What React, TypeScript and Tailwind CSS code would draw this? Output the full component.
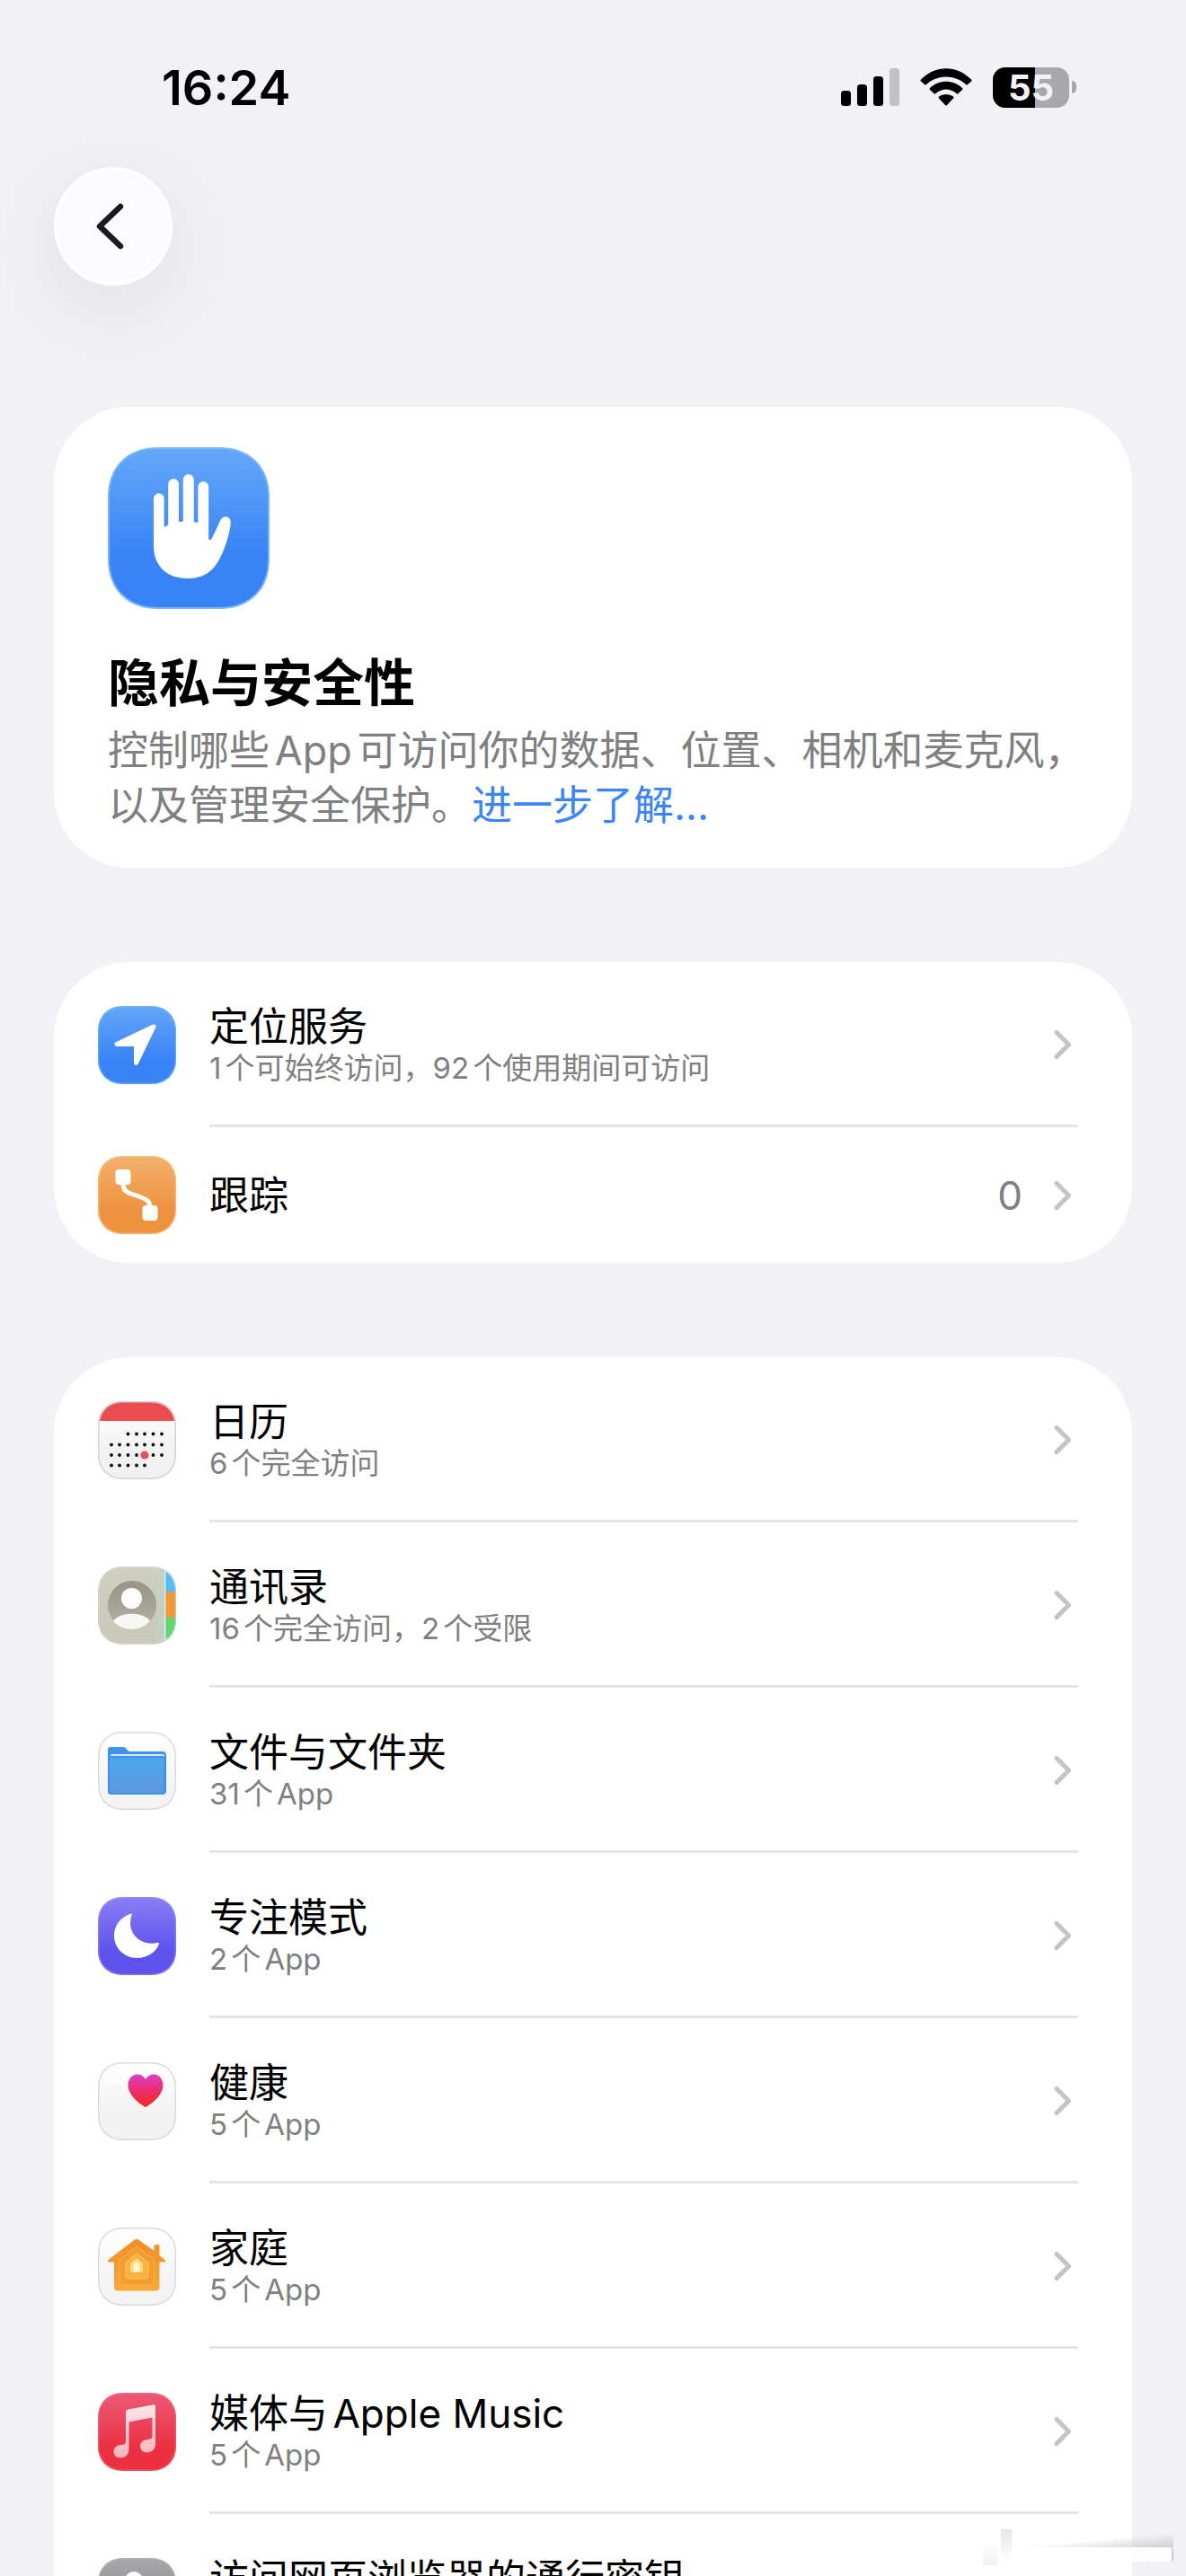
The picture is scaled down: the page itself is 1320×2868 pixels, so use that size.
import React from "react";

/* ── Types ─────────────────────────────────────────────────────────────────── */
interface SettingItem {
  title: string;
  detail?: string;
  value?: string;
  icon: React.ReactNode;
}

interface TileProps {
  id: string;
  from: string;
  to: string;
  edge: string;
  children: React.ReactNode;
}

/* ── App icon tile ─────────────────────────────────────────────────────────── */
const TILE_PATH =
  "M28 0H59C76 0 87 11 87 28V59C87 76 76 87 59 87H28C11 87 0 76 0 59V28C0 11 11 0 28 0Z";

const Tile = ({ id, from, to, edge, children }: TileProps) => (
  <svg viewBox="0 0 87 87" className="size-[87px] shrink-0" aria-hidden="true">
    <defs>
      <linearGradient id={`${id}-bg`} x1="0" y1="0" x2="0" y2="1">
        <stop offset="0" stopColor={from} />
        <stop offset="0.7" stopColor={to} />
        <stop offset="1" stopColor={to} />
      </linearGradient>
      <clipPath id={`${id}-clip`}>
        <path d={TILE_PATH} />
      </clipPath>
    </defs>
    <g clipPath={`url(#${id}-clip)`}>
      <rect width="87" height="87" fill={`url(#${id}-bg)`} />
      {children}
      <path d={TILE_PATH} fill="none" stroke={edge} strokeWidth="3" />
    </g>
  </svg>
);

/* ── Icons ─────────────────────────────────────────────────────────────────── */
const LocationIcon = () => (
  <Tile id="location" from="#64a8f8" to="#3883f6" edge="#7ab8f988">
    <path
      d="M62 23L21 42.5H42.500V63.500Z"
      fill="#fff"
      stroke="#fff"
      strokeWidth="5"
      strokeLinejoin="round"
    />
  </Tile>
);

const TrackingIcon = () => (
  <Tile id="tracking" from="#f2b26c" to="#ee9240" edge="#f6c88a99">
    <rect x="19.500" y="15" width="17" height="17" rx="4" fill="#fff" />
    <rect x="49.500" y="55" width="17" height="17" rx="4" fill="#fff" />
    <path
      d="M28 30C28 38 31 40 38 42.500L48 46C55 49 58 51 58 57"
      fill="none"
      stroke="#fff"
      strokeWidth="5"
    />
  </Tile>
);

const DOT_COLS = [15, 24, 33.5, 43, 52, 61.5, 71];
const DOT_ROWS = [
  { y: 36.5, start: 2, end: 6 },
  { y: 48.5, start: 0, end: 6 },
  { y: 60, start: 0, end: 6 },
  { y: 71.5, start: 0, end: 4 },
];

const CalendarIcon = () => (
  <Tile id="calendar" from="#ffffff" to="#f1f1f2" edge="#d4d4d6">
    {DOT_ROWS.map((row) =>
      DOT_COLS.slice(row.start, row.end + 1).map((x) => (
        <circle key={`${x}-${row.y}`} cx={x} cy={row.y} r="1.9" fill="#111" />
      ))
    )}
    <circle cx="52" cy="60" r="4.600" fill="#ea4f55" />
    <rect width="87" height="22" fill="#ea4c50" />
  </Tile>
);

const ContactsIcon = () => (
  <Tile id="contacts" from="#cfd0c2" to="#cac9bc" edge="#dcdcd288">
    <defs>
      <linearGradient id="contacts-ring" x1="0" y1="0" x2="0" y2="1">
        <stop offset="0" stopColor="#979386" />
        <stop offset="1" stopColor="#b5b1a3" />
      </linearGradient>
      <linearGradient id="contacts-spine" x1="0" y1="0" x2="1" y2="0">
        <stop offset="0" stopColor="#cbd3c6" stopOpacity="0" />
        <stop offset="1" stopColor="#b9d3c6" />
      </linearGradient>
    </defs>
    <rect x="62" width="13" height="87" fill="url(#contacts-spine)" />
    <rect x="75" width="12" height="28" fill="#55bdf6" />
    <rect x="75" y="28" width="12" height="29" fill="#f1983a" />
    <rect x="75" y="57" width="12" height="30" fill="#5dd671" />
    <rect x="74" width="1.500" height="87" fill="#e6ebe2" />
    <circle cx="38" cy="43" r="27" fill="url(#contacts-ring)" />
    <circle cx="37.500" cy="35.500" r="11.500" fill="#fcfcfb" />
    <path d="M17 60.500C25 50 50 50 58 60.500C49 73 26 73 17 60.500Z" fill="#f7f7f5" />
  </Tile>
);

const FilesIcon = () => (
  <Tile id="files" from="#ffffff" to="#f4f4f4" edge="#dadada">
    <defs>
      <linearGradient id="files-front" x1="0" y1="0" x2="0" y2="1">
        <stop offset="0" stopColor="#4aa9ee" />
        <stop offset="1" stopColor="#5f98dd" />
      </linearGradient>
    </defs>
    <path
      d="M14 17H28C32 17 32 22 36 22H72Q76 22 76 26V66Q76 70 72 70H15Q11 70 11 66V20Q11 17 14 17Z"
      fill="#3f93ee"
    />
    <rect x="14" y="25" width="60" height="5" rx="2" fill="#d4ecfc" />
    <rect x="12" y="28" width="62" height="41" rx="3" fill="url(#files-front)" stroke="#4390ee" strokeWidth="2" />
  </Tile>
);

const FocusIcon = () => (
  <Tile id="focus" from="#8b7ef5" to="#5d52ec" edge="#a59cf477">
    <path
      d="M37 18.500C25.500 22 18 31.500 18 43C18 57 29.500 68 43.500 68C55 68 65 61 68 52.500C68.400 51.300 67.500 50.600 66 51C48 55 31 41 37.500 20C37.800 19 37.800 18.300 37 18.500Z"
      fill="#fff"
    />
  </Tile>
);

const HealthIcon = () => (
  <Tile id="health" from="#ffffff" to="#f2f2f2" edge="#dadada">
    <defs>
      <linearGradient id="health-heart" x1="0" y1="0" x2="0" y2="1">
        <stop offset="0" stopColor="#dc3fc8" />
        <stop offset="0.5" stopColor="#ec2d6c" />
        <stop offset="1" stopColor="#f5291f" />
      </linearGradient>
    </defs>
    <path
      d="M53 50C49 48 33.500 38 33.500 25.500C33.500 18.500 38 13.500 43.500 13.500C48 13.500 51 15.500 53 19C55 15.500 58 13.500 62.500 13.500C68 13.500 72.500 18.500 72.500 25.500C72.500 38 57 48 53 50Z"
      fill="url(#health-heart)"
    />
  </Tile>
);

const HomeIcon = () => (
  <Tile id="home" from="#ffffff" to="#f4f4f4" edge="#dadada">
    <defs>
      <linearGradient id="home-outer" x1="0" y1="0" x2="0" y2="1">
        <stop offset="0" stopColor="#ee8d2d" />
        <stop offset="1" stopColor="#f6ab38" />
      </linearGradient>
    </defs>
    <path
      d="M41 13.500Q43 12 45 13.500L62.500 26V20.500Q62.500 19 64 19H67Q68.500 19 68.500 20.500V31L75 36.500Q76 38.500 74 38.500H68.500V66Q68.500 70.500 64 70.500H22.500Q18 70.500 18 66V38.500H12Q10 38 11.500 36Z"
      fill="url(#home-outer)"
    />
    <path d="M43 21L62.500 36V61Q62.500 64 59.500 64H27Q24 64 24 61V36Z" fill="#f49c2d" stroke="#f8b452" />
    <path d="M43 29L56 39V54Q56 57 53 57H34Q31 57 31 54V39Z" fill="#f7b23f" stroke="#fac766" />
    <path d="M43 34L50 40V50H36V40Z" fill="#fbd77a" />
    <path d="M43 38L46.500 41V49H39.500V41Z" fill="#fff8d8" />
  </Tile>
);

const MusicIcon = () => (
  <Tile id="music" from="#ec5a76" to="#ec3042" edge="#f2838f66">
    <defs>
      <linearGradient id="music-note" x1="0" y1="0" x2="0" y2="1">
        <stop offset="0" stopColor="#fde6ea" />
        <stop offset="1" stopColor="#f7b4bd" />
      </linearGradient>
    </defs>
    <path
      d="M33.500 18.500L62 13.200Q64 13 64 15V57.500C64 63 60 66.500 54.500 66.500C50 66.500 47 63.500 47 59.800C47 55.500 50 53 54 52.300L58 51.500Q60.500 51 60.500 48.500V27.500L34.500 32.500V62.500C34.500 69 30.500 72.500 25 72.500C20.500 72.500 17.500 69.500 17.500 65.800C17.500 61.500 20.500 59 24.500 58.300L28.500 57.500Q31 57 31 54.500V21.500Q31 19 33.500 18.500Z"
      fill="url(#music-note)"
    />
  </Tile>
);

const PasskeyIcon = () => (
  <Tile id="passkey" from="#a7a7ab" to="#8d8d92" edge="#bcbcc077">
    <circle cx="40" cy="25" r="10" fill="#fff" />
    <path d="M20 62C20 46 30 40 40 40S60 46 60 62Z" fill="#fff" />
  </Tile>
);

const HandIcon = () => (
  <svg viewBox="0 0 180 180" className="size-[180px]" aria-hidden="true">
    <defs>
      <linearGradient id="hand-bg" x1="0" y1="0" x2="0" y2="1">
        <stop offset="0" stopColor="#64a8f8" />
        <stop offset="0.68" stopColor="#3883f6" />
        <stop offset="1" stopColor="#3883f6" />
      </linearGradient>
    </defs>
    <path
      d="M56 1H124C158 1 179 22 179 56V124C179 158 158 179 124 179H56C22 179 1 158 1 124V56C1 22 22 1 56 1Z"
      fill="url(#hand-bg)"
      stroke="#76b5f9"
      strokeWidth="2"
    />
    <path
      d="M51 57a5.800 5.800 0 0 1 11.600 0V89L67.200 86.500V41a5.900 5.900 0 0 1 11.800 0V83L83.800 82.500V36a6 6 0 0 1 12 0V83L100.400 84V44a5.900 5.900 0 0 1 11.800 0V102.500Q114.500 104 116 101L125.500 81C129 74.500 137.500 77 136.800 84.500C136 94 131 111 125.500 122C117.500 138.500 107 146 88 146C66 146 51 132 51 110Z"
      fill="#fff"
    />
  </svg>
);

const Chevron = () => (
  <svg viewBox="0 0 20 34" className="h-[34px] w-5 shrink-0" fill="none" aria-hidden="true">
    <path
      d="M3 3.500L16.500 17L3 30.500"
      stroke="#c4c4c6"
      strokeWidth="5"
      strokeLinecap="round"
      strokeLinejoin="round"
    />
  </svg>
);

/* ── Status bar ────────────────────────────────────────────────────────────── */
const SignalIcon = () => (
  <svg viewBox="0 0 65 42" className="h-[42px] w-[65px]" aria-label="信号">
    <rect x="0" y="25" width="11" height="17" rx="3.500" />
    <rect x="18" y="18" width="11" height="24" rx="3.500" />
    <rect x="36" y="9" width="11" height="33" rx="3.500" />
    <rect x="54" y="0" width="11" height="42" rx="3.500" fill="#c0c0c5" />
  </svg>
);

const WifiIcon = () => (
  <svg viewBox="0 0 58 42" className="h-[42px] w-[58px]" aria-label="Wi-Fi">
    <path d="M1 12.500C17 -4 41 -4 57 12.500Q58 13.500 57 14.500L53 18Q52 19 51 18C38.500 6.500 19.500 6.500 7 18Q6 19 5 18L1 14.500Q0 13.500 1 12.500Z" />
    <path d="M11 22C21.500 12.300 36.500 12.300 47 22Q48 23 47 24L42.500 28Q41.500 29 40.500 28C33.500 22 24.500 22 17.500 28Q16.500 29 15.500 28L11 24Q10 23 11 22Z" />
    <path d="M21 31.500C25.500 28 32.500 28 37 31.500Q38 32.500 37 33.500L30 41Q29 42 28 41L21 33.500Q20 32.500 21 31.500Z" />
  </svg>
);

const Battery = ({ level }: { level: number }) => (
  <div className="flex items-center gap-[3px]">
    <div className="relative flex h-[45px] w-[85px] items-center justify-center rounded-[14px] bg-[#a8a8ac]">
      <div className="absolute inset-y-0 left-0 rounded-l-[14px] bg-black" style={{ width: `${level}%` }} />
      <span className="relative text-[40px] leading-[45px] font-bold text-[#f2f2f6]">{level}</span>
    </div>
    <div className="h-[14px] w-[5px] rounded-r-full bg-[#a8a8ac]" />
  </div>
);

const StatusBar = () => (
  <header className="flex h-[186px] items-start justify-between pt-[66px] pr-[122px] pl-[180px]">
    <time className="text-[54px] leading-[64px] font-semibold">16:24</time>
    <div className="flex h-[62px] items-center gap-[23px]">
      <SignalIcon />
      <WifiIcon />
      <Battery level={55} />
    </div>
  </header>
);

/* ── Lists ─────────────────────────────────────────────────────────────────── */
const Row = ({ item, last }: { item: SettingItem; last: boolean }) => (
  <li>
    <a href="#" className={`flex gap-[37px] pl-[49px] ${last ? "h-[151px]" : "h-[184px]"}`}>
      <span className={`flex items-center ${last ? "" : "pt-px"}`}>{item.icon}</span>
      <span
        className={`mr-[60px] flex min-w-0 flex-1 items-center pr-[7px] ${
          last ? "" : "border-b-[3px] border-[#e6e6e6] pt-[3px]"
        }`}
      >
        <span className="flex min-w-0 flex-1 flex-col">
          <span className="text-[44px] leading-[52px] text-black">{item.title}</span>
          {item.detail && (
            <span className="text-[33px] leading-[40px] text-[#808080]">{item.detail}</span>
          )}
        </span>
        {item.value && (
          <span className="mr-[35px] text-[44px] leading-[52px] text-[#808080]">{item.value}</span>
        )}
        <Chevron />
      </span>
    </a>
  </li>
);

const Group = ({ items, open = false }: { items: SettingItem[]; open?: boolean }) => (
  <ul className="shrink-0 rounded-[84px] bg-white">
    {items.map((item, i) => (
      <Row key={item.title} item={item} last={!open && i === items.length - 1} />
    ))}
  </ul>
);

const LOCATION_ITEMS: SettingItem[] = [
  { title: "定位服务", detail: "1个可始终访问，92个使用期间可访问", icon: <LocationIcon /> },
  { title: "跟踪", value: "0", icon: <TrackingIcon /> },
];

const ACCESS_ITEMS: SettingItem[] = [
  { title: "日历", detail: "6个完全访问", icon: <CalendarIcon /> },
  { title: "通讯录", detail: "16个完全访问，2个受限", icon: <ContactsIcon /> },
  { title: "文件与文件夹", detail: "31个App", icon: <FilesIcon /> },
  { title: "专注模式", detail: "2个App", icon: <FocusIcon /> },
  { title: "健康", detail: "5个App", icon: <HealthIcon /> },
  { title: "家庭", detail: "5个App", icon: <HomeIcon /> },
  { title: "媒体与Apple Music", detail: "5个App", icon: <MusicIcon /> },
  { title: "访问网页浏览器的通行密钥", detail: "0个App", icon: <PasskeyIcon /> },
];

/* ── Main component ─────────────────────────────────────────────────────────── */
export default function App() {
  return (
    <div
      lang="zh-CN"
      className="relative h-screen overflow-hidden bg-[#f1f1f6] font-['Inter','Noto_Sans_CJK_SC',sans-serif] text-black [text-autospace:normal]"
    >
      <StatusBar />

      <nav className="px-[60px]">
        <button
          type="button"
          aria-label="返回"
          className="flex size-[132px] items-center justify-center rounded-full border-4 border-white bg-[#fbfbff] pr-2 shadow-[0_24px_96px_8px_rgba(0,0,0,0.07)]"
        >
          <svg viewBox="0 0 32 52" className="h-[52px] w-8" fill="none" aria-hidden="true">
            <path
              d="M28 4L5 26L28 48"
              stroke="#1a1a1e"
              strokeWidth="6.500"
              strokeLinecap="round"
              strokeLinejoin="round"
            />
          </svg>
        </button>
      </nav>

      <main className="flex flex-col gap-[105px] px-[60px] pt-[135px]">
        <section className="rounded-[84px] bg-white pt-[45px] pr-10 pb-[39px] pl-[60px]">
          <HandIcon />
          <h1 className="mt-[47px] text-[57px] leading-[72px] font-bold">隐私与安全性</h1>
          <p className="mt-2 text-[45px] leading-[61px] text-[#808080]">
            控制哪些App可访问你的数据、位置、相机和麦克风，以及管理安全保护。
            <a href="#" className="text-[#3a85f7] [text-autospace:no-autospace]">
              进一步了解...
            </a>
          </p>
        </section>

        <Group items={LOCATION_ITEMS} />
        <Group items={ACCESS_ITEMS} open />
      </main>

      {/* Faint glass streak over the lower right corner */}
      <div className="absolute right-[14px] bottom-[12px] flex h-[40px] w-[212px] items-start" aria-hidden="true">
        <div className="mt-3 h-7 w-4 bg-linear-to-t from-[#f2f2f2] to-transparent" />
        <div className="ml-1 h-9 w-3 bg-linear-to-b from-[#e6e6e6] to-transparent" />
        <div className="mt-1 flex flex-1 flex-col">
          <div className="h-4 bg-linear-to-br from-transparent from-50% to-[#cfcfd2]" />
          <div className="h-4 rounded-r-sm border-r-2 border-[#c9c9cc] bg-linear-to-r from-transparent to-white" />
        </div>
      </div>
    </div>
  );
}
